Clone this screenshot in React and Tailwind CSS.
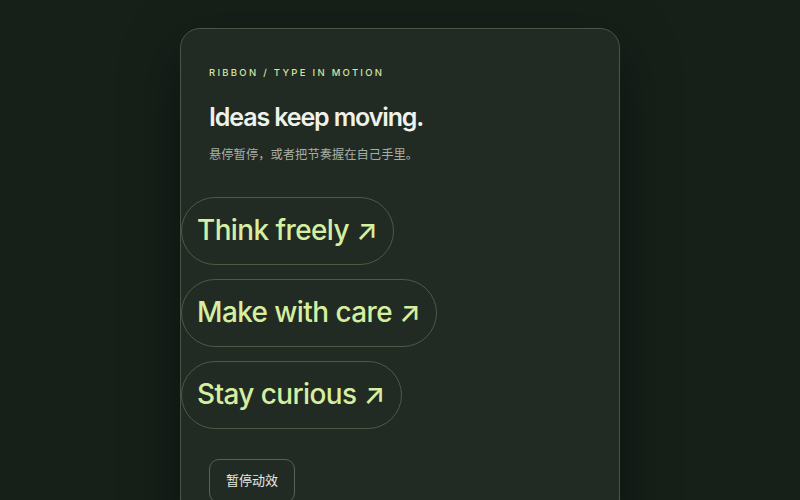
import React from "react";

const pills = ["Think freely", "Make with care", "Stay curious"];

export default function App() {
  return (
    <div
      className="w-[800px] h-[500px] overflow-hidden bg-[#162019] flex justify-center"
      style={{ fontFamily: "Inter, 'Noto Sans CJK SC', sans-serif" }}
    >
      <div className="mt-[28px] w-[440px] h-[520px] shrink-0 rounded-[20px] border border-[#4a5447] bg-[#222a24] shadow-[0_20px_60px_rgba(0,0,0,0.45)] overflow-hidden">
        <div className="px-[28px] pt-[36px]">
          <div className="text-[9.5px] leading-[16px] font-medium tracking-[0.24em] text-[#cfe6a0]">
            RIBBON / TYPE IN MOTION
          </div>
          <h1 className="mt-[20px] text-[25px] leading-[32px] font-semibold tracking-[-0.045em] text-[#eef2ea]">
            Ideas keep moving.
          </h1>
          <p className="mt-[13px] text-[12.3px] leading-[18px] text-[#a7afa3]">
            悬停暂停，或者把节奏握在自己手里。
          </p>
        </div>
        <div className="mt-[33px] flex flex-col items-start gap-[14px]">
          {pills.map((p) => (
            <div
              key={p}
              className="h-[68px] flex items-center rounded-full border border-[#4d5a46] pl-[15px] pr-[16px] text-[27.9px] font-medium tracking-[-0.02em] text-[#d6eea0] whitespace-nowrap"
            >
              {p} ↗
            </div>
          ))}
        </div>
        <div className="px-[28px] mt-[30px]">
          <button className="h-[44px] px-[16px] rounded-[10px] border border-[#5a6158] text-[13px] text-[#e6ebe3]">
            暂停动效
          </button>
        </div>
      </div>
    </div>
  );
}
